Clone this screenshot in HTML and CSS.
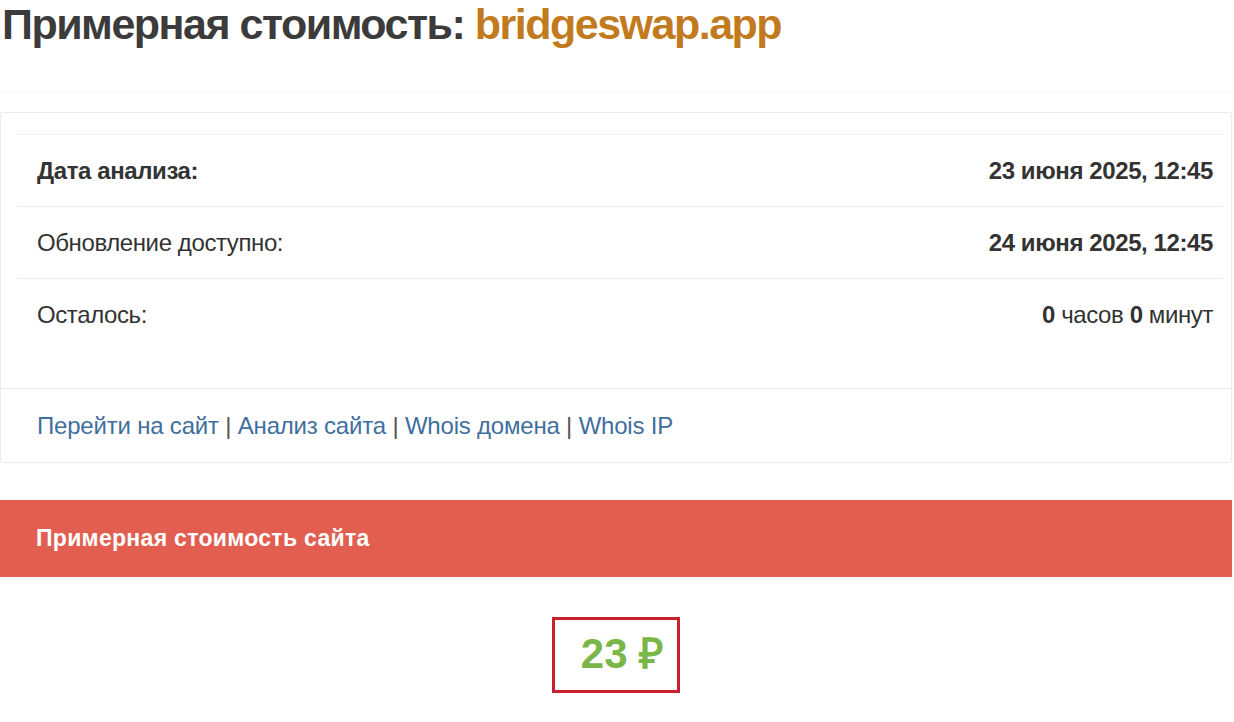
FILE: index.html
```html
<!DOCTYPE html>
<html lang="ru">
<head>
<meta charset="utf-8">
<title>Примерная стоимость: bridgeswap.app</title>
<link rel="stylesheet" href="styles.css">
</head>
<body>
<div class="page">
  <h1 class="title">Примерная стоимость: <span class="domain">bridgeswap.app</span></h1>
  <div class="divider"></div>
  <div class="card">
    <div class="card-body">
      <table class="info">
        <tr>
          <td class="label strong">Дата анализа:</td>
          <td class="value strong">23 июня 2025, 12:45</td>
        </tr>
        <tr>
          <td class="label">Обновление доступно:</td>
          <td class="value strong">24 июня 2025, 12:45</td>
        </tr>
        <tr>
          <td class="label">Осталось:</td>
          <td class="value"><b>0</b> часов <b>0</b> минут</td>
        </tr>
      </table>
    </div>
    <div class="card-footer">
      <a href="#">Перейти на сайт</a> <span class="sep">|</span> <a href="#">Анализ сайта</a> <span class="sep">|</span> <a href="#">Whois домена</a> <span class="sep">|</span> <a href="#">Whois IP</a>
    </div>
  </div>
  <div class="panel">
    <div class="panel-heading">Примерная стоимость сайта</div>
    <div class="panel-body">
      <div class="price">23 ₽</div>
    </div>
  </div>
</div>
</body>
</html>
```
FILE: styles.css
```css
* { box-sizing: border-box; }
html, body { margin: 0; padding: 0; background: #fff; }
body {
  font-family: "Liberation Sans", Arial, sans-serif;
  color: #333;
}
.page { width: 1232px; }
.title {
  margin: 0;
  padding: 1px 0 0 2px;
  font-size: 43px;
  line-height: 46px;
  font-weight: bold;
  color: #3b3b3b;
  letter-spacing: -1.5px;
}
.domain { color: #c27a1e; }
.divider {
  height: 1px;
  margin-top: 44px;
  background: #f5f5f5;
}
.card {
  margin-top: 20px;
  border: 1px solid #ececec;
  border-radius: 2px;
}
.card-body { padding: 21px 8px 37px 16px; }
.info {
  width: 100%;
  border-collapse: collapse;
}
.info td {
  height: 72px;
  border-top: 1px solid #eeeeee;
  font-size: 24px;
  letter-spacing: -0.4px;
  padding: 0 10px 0 20px;
  vertical-align: middle;
}
.info tr:first-child td { border-top: 1px solid #f0f0f0; }
.strong { font-weight: bold; }
.label { color: #333; }
.value { text-align: right; color: #333; }
.card-footer {
  border-top: 1px solid #ececec;
  padding: 23px 36px 0;
  height: 74px;
  font-size: 24px;
  line-height: 28px;
  letter-spacing: -0.2px;
}
.card-footer a { color: #3f6f9e; text-decoration: none; }
.sep { color: #555; }
.panel { margin-top: 37px; }
.panel-heading {
  background: #e25e50;
  color: #fff;
  height: 77px;
  padding: 0 36px;
  display: flex;
  align-items: center;
  font-size: 23px;
  font-weight: bold;
  letter-spacing: 0.3px;
}
.panel-body {
  display: flex;
  justify-content: center;
  padding-top: 40px;
}
.price {
  width: 128px;
  height: 76px;
  border: 3px solid #c8202c;
  color: #7ab648;
  font-size: 42px;
  font-weight: bold;
  letter-spacing: 0;
  display: flex;
  align-items: center;
  justify-content: center;
  padding: 0 0 6px 12px;
}
```
